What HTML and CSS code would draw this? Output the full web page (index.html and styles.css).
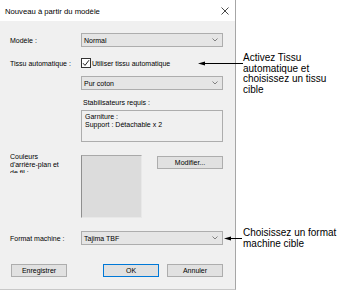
FILE: index.html
```html
<!DOCTYPE html>
<html lang="fr">
<head>
  <meta charset="UTF-8">
  <title>Nouveau à partir du modèle</title>
  <link rel="stylesheet" href="styles.css">
</head>
<body>
  <div class="page">
    <div class="dialog">
      <div class="titlebar">
        <span class="title">Nouveau à partir du modèle</span>
        <svg class="close" width="8" height="8" viewBox="0 0 8 8"><path d="M0.5 0.5 L7.5 7.5 M7.5 0.5 L0.5 7.5" stroke="#333" stroke-width="0.9"/></svg>
      </div>

      <div class="body">
        <div class="row row-model">
          <label class="lbl">Modèle :</label>
          <div class="combo">Normal<svg class="chev" width="6" height="4" viewBox="0 0 6 4"><path d="M0.5 0.5 L3 3 L5.5 0.5" fill="none" stroke="#666" stroke-width="0.8"/></svg></div>
        </div>

        <div class="row row-auto">
          <label class="lbl">Tissu automatique :</label>
          <div class="check">
            <svg class="box" width="10" height="10" viewBox="0 0 10 10"><rect x="0.5" y="0.5" width="9" height="9" fill="#fff" stroke="#333"/><path d="M2 5.2 L4 7.4 L8 2.2" fill="none" stroke="#222" stroke-width="1"/></svg>
            <span>Utiliser tissu automatique</span>
          </div>
        </div>

        <div class="row row-fabric">
          <span class="lbl"></span>
          <div class="combo">Pur coton<svg class="chev" width="6" height="4" viewBox="0 0 6 4"><path d="M0.5 0.5 L3 3 L5.5 0.5" fill="none" stroke="#666" stroke-width="0.8"/></svg></div>
        </div>

        <div class="row row-stab">
          <span class="lbl"></span>
          <span class="sub">Stabilisateurs requis :</span>
        </div>

        <div class="row row-stabbox">
          <span class="lbl"></span>
          <div class="stabbox">
            <div>Garniture :</div>
            <div>Support : Détachable x 2</div>
          </div>
        </div>

        <div class="row row-colors">
          <label class="lbl lbl-multi">Couleurs<br>d'arrière-plan et<br>de fil :</label>
          <div class="swatch"></div>
          <button class="btn btn-modify">Modifier...</button>
        </div>

        <div class="row row-format">
          <label class="lbl">Format machine :</label>
          <div class="combo">Tajima TBF<svg class="chev" width="6" height="4" viewBox="0 0 6 4"><path d="M0.5 0.5 L3 3 L5.5 0.5" fill="none" stroke="#666" stroke-width="0.8"/></svg></div>
        </div>

        <div class="buttons">
          <button class="btn">Enregistrer</button>
          <div class="right-btns">
            <button class="btn btn-ok">OK</button>
            <button class="btn">Annuler</button>
          </div>
        </div>
      </div>
    </div>

    <div class="notes">
      <p class="note note-fabric">Activez Tissu<br>automatique et<br>choisissez un tissu<br>cible</p>
      <p class="note note-format">Choisissez un format<br>machine cible</p>
    </div>

    <!-- fleches des annotations -->
    <svg class="arrows" width="358" height="294" viewBox="0 0 358 294">
      <path d="M203 63.5 H243" stroke="#000" stroke-width="1"/>
      <path d="M198 63.5 L205 61.5 L205 65.5 Z" fill="#000"/>
      <path d="M229 238.5 H242" stroke="#000" stroke-width="1"/>
      <path d="M224 238.5 L231 236.5 L231 240.5 Z" fill="#000"/>
    </svg>
  </div>
</body>
</html>
```

FILE: styles.css
```css
/* Dialogue "Nouveau a partir du modele" avec annotations */
body {
  margin: 0;
  background: #fff;
  font-family: "Liberation Sans", Arial, sans-serif;
  color: #000;
}

.page {
  position: relative;
  display: flex;
  width: 358px;
  height: 294px;
  overflow: hidden;
}

.dialog {
  width: 235px;
  height: 289px;
  border-right: 1px solid #a6a6a6;
  border-bottom: 1px solid #c8c8c8;
  display: flex;
  flex-direction: column;
  flex-shrink: 0;
}

.titlebar {
  height: 21px;
  background: #fff;
  display: flex;
  align-items: center;
  justify-content: space-between;
  padding: 0 6px 0 5px;
}

.title {
  font-size: 7.7px;
  margin-top: 1px;
}

.close {
  margin-top: 1px;
}

.body {
  flex: 1;
  background: #f0f0f0;
  padding: 0 12px 0 10px;
  font-size: 7px;
}

.row {
  display: flex;
  align-items: center;
}

.lbl {
  width: 71px;
  flex-shrink: 0;
}

.combo {
  width: 142px;
  height: 14px;
  box-sizing: border-box;
  border: 1px solid #adadad;
  background: #e5e5e5;
  display: flex;
  align-items: center;
  justify-content: space-between;
  padding: 0 4px 0 2px;
}

.row-model { margin-top: 12px; }
.row-auto { margin-top: 9px; height: 14px; }
.row-fabric { margin-top: 6px; }
.row-stab { margin-top: 7px; height: 10px; }
.row-stab .sub { padding-left: 2px; }
.row-stabbox { margin-top: 3px; }
.row-colors { margin-top: 13px; align-items: flex-start; }
.row-format { margin-top: 13px; }

.check {
  display: flex;
  align-items: center;
  gap: 1px;
}

.stabbox {
  width: 142px;
  height: 32px;
  box-sizing: border-box;
  border: 1px solid #adadad;
  padding: 2px 3px;
  line-height: 7.5px;
}

.lbl-multi {
  height: 20px;
  overflow: hidden;
  line-height: 8px;
  margin-top: -2px;
  white-space: nowrap;
}

.swatch {
  width: 61px;
  height: 63px;
  box-sizing: border-box;
  background: #dcdcdc;
  border-top: 1px solid #a9a9a9;
  border-left: 1px solid #8f8f8f;
  border-right: 1px solid #e8e8e8;
  border-bottom: 1px solid #e8e8e8;
}

.btn {
  height: 13px;
  box-sizing: border-box;
  border: 1px solid #adadad;
  background: #e1e1e1;
  font-family: inherit;
  font-size: 7px;
  color: #000;
  padding: 0;
  width: 56px;
  line-height: 11px;
}

.btn-modify {
  margin-left: 15px;
  margin-top: 1px;
  width: 66px;
}

.btn-ok {
  border-color: #0078d7;
}

.buttons {
  margin-top: 19px;
  display: flex;
  justify-content: space-between;
  padding-left: 1px;
}

.right-btns {
  display: flex;
  gap: 8px;
}

.notes {
  padding-left: 7px;
  font-size: 10px;
  line-height: 10.6px;
}

.note {
  margin: 0;
}

.note-fabric { margin-top: 53px; }
.note-format { margin-top: 133px; }

.arrows {
  position: absolute;
  left: 0;
  top: 0;
  pointer-events: none;
}
```
